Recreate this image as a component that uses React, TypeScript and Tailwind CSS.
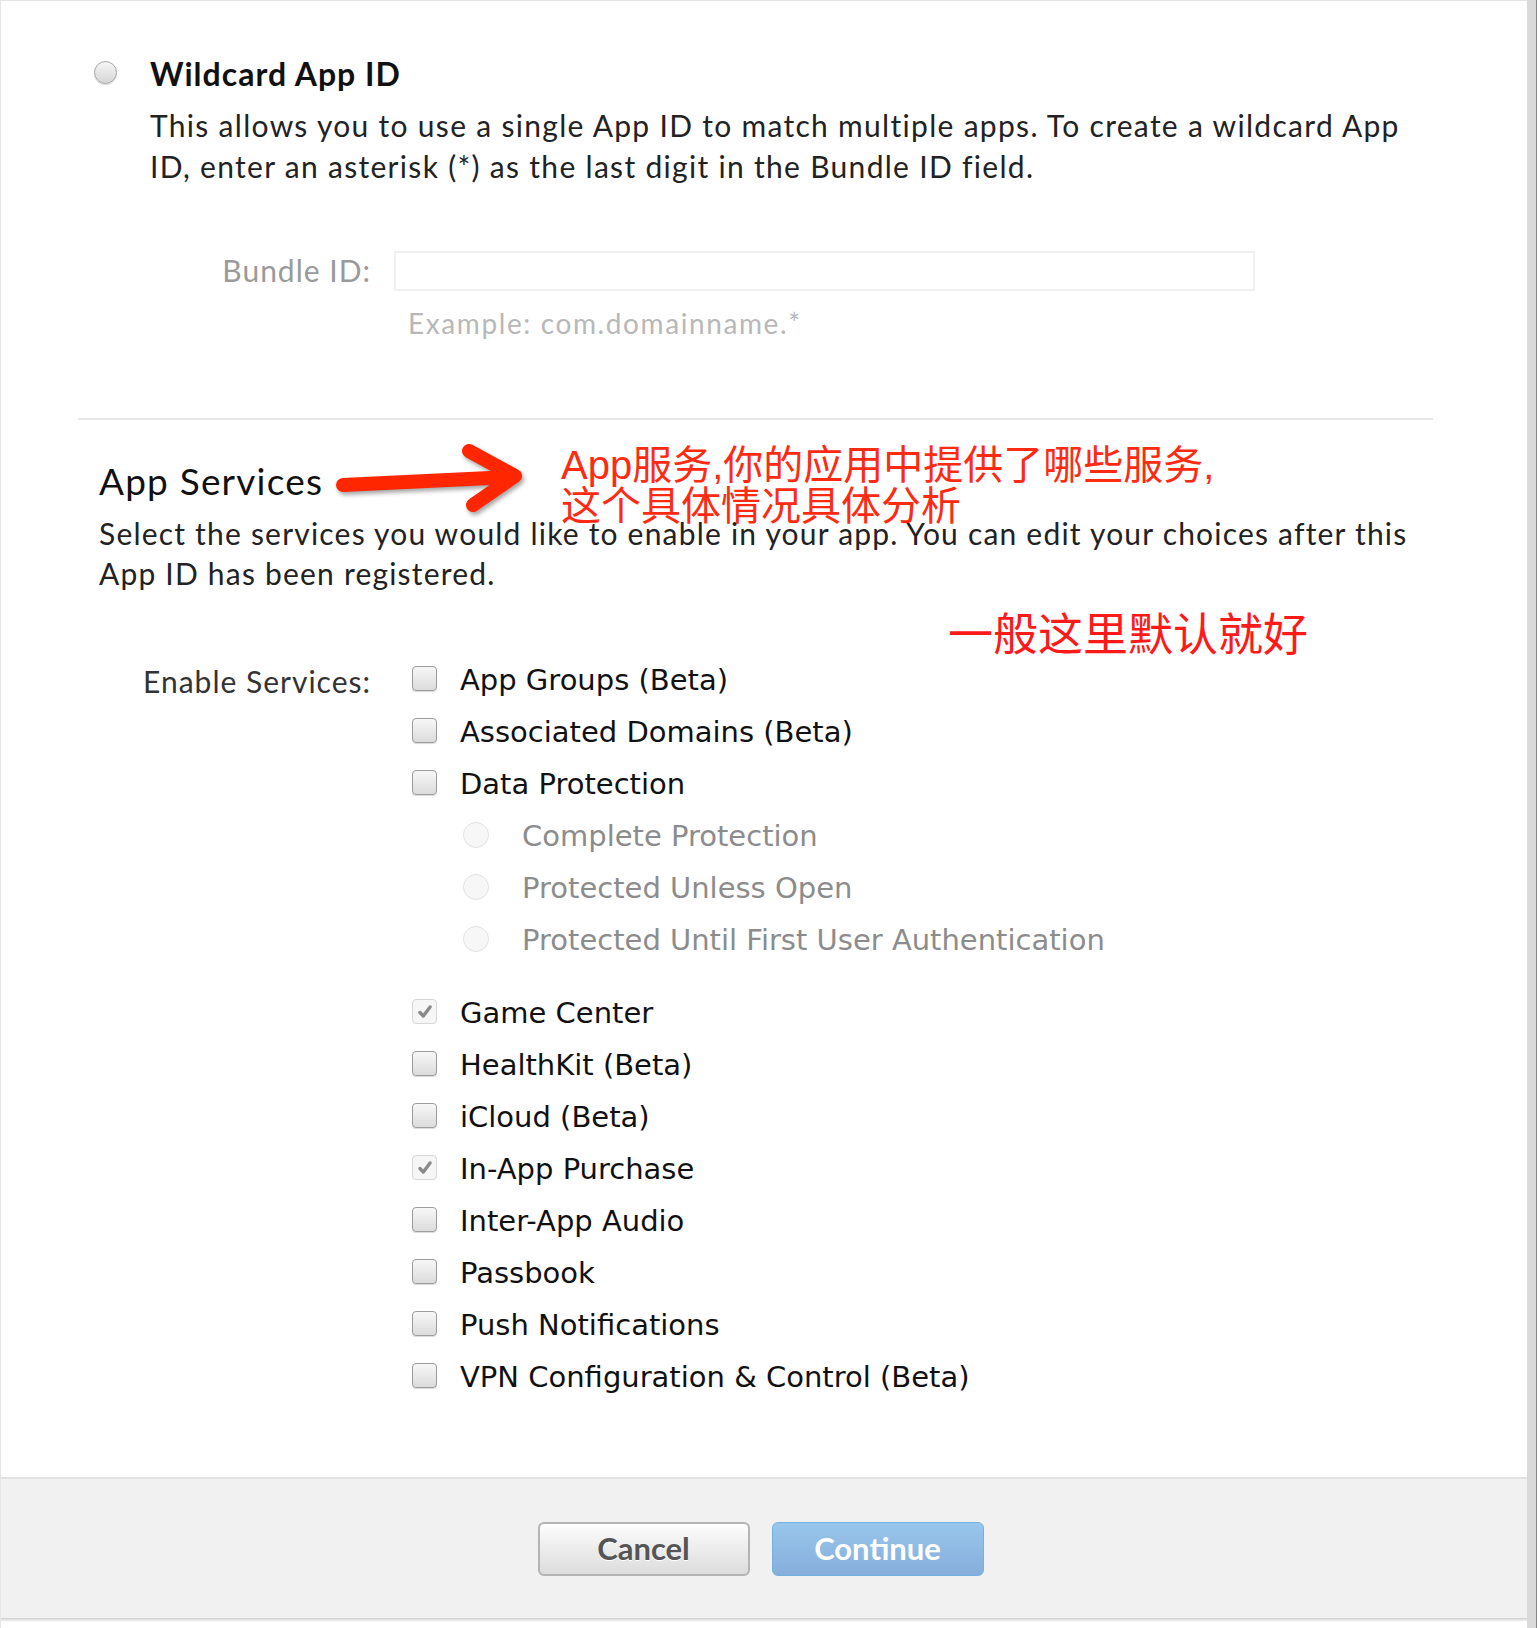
import React from 'react';

interface Service {
  label: string;
  checked?: boolean;
  options?: string[];
}

const services: Service[] = [
  { label: 'App Groups (Beta)' },
  { label: 'Associated Domains (Beta)' },
  {
    label: 'Data Protection',
    options: ['Complete Protection', 'Protected Unless Open', 'Protected Until First User Authentication'],
  },
  { label: 'Game Center', checked: true },
  { label: 'HealthKit (Beta)' },
  { label: 'iCloud (Beta)' },
  { label: 'In-App Purchase', checked: true },
  { label: 'Inter-App Audio' },
  { label: 'Passbook' },
  { label: 'Push Notifications' },
  { label: 'VPN Configuration & Control (Beta)' },
];

function Checkbox({ checked }: { checked?: boolean }) {
  if (checked) {
    return (
      <span className="w-[25px] h-[25px] mb-[5px] shrink-0 rounded-[4px] border border-[#d6d6d6] bg-[#f6f6f6] flex items-center justify-center">
        <svg width="18" height="18" viewBox="0 0 16 16">
          <path d="M3.5 8.5 L6.5 11.5 L12.5 3.5" fill="none" stroke="#8a8a8a" strokeWidth="3" strokeLinecap="round" strokeLinejoin="round" />
        </svg>
      </span>
    );
  }
  return (
    <span className="w-[25px] h-[25px] mb-[5px] shrink-0 rounded-[4px] border border-[#9c9c9c] bg-gradient-to-b from-[#f7f7f7] to-[#dcdcdc] shadow-[0_1px_1px_rgba(0,0,0,0.15)]" />
  );
}

function Arrow() {
  return (
    <svg
      className="absolute left-[320px] top-[432px] drop-shadow-[2px_3px_2px_rgba(0,0,0,0.35)]"
      width="220"
      height="90"
      viewBox="0 0 220 90"
    >
      <path
        d="M22 52 L190 44 M148 18 L194 43 L152 72"
        fill="none"
        stroke="#ff2600"
        strokeWidth="14"
        strokeLinecap="round"
        strokeLinejoin="round"
      />
    </svg>
  );
}

export default function App() {
  return (
    <div className="w-[1538px] h-[1628px] bg-white flex font-[Lato,sans-serif] tracking-[1px] text-[#222]">
      <div className="w-[1527px] flex flex-col border-l border-t border-[#e6e6e6] relative">
        <div className="flex-1">
          {/* Wildcard App ID */}
          <div className="flex items-start pl-[93px] pt-[52px]">
            <span className="w-[23px] h-[23px] mt-[8px] shrink-0 rounded-full border border-[#a6a6a6] bg-gradient-to-b from-[#f6f6f6] to-[#d6d6d6] shadow-[0_1px_1px_rgba(0,0,0,0.15)]" />
            <div className="ml-[33px]">
              <h3 className="text-[32px] leading-[41px] font-bold text-[#111]">Wildcard App ID</h3>
              <p className="mt-[11px] w-[1275px] text-[30px] leading-[41px] tracking-[1.3px] text-[#222]">
                This allows you to use a single App ID to match multiple apps. To create a wildcard App ID, enter an
                asterisk (*) as the last digit in the Bundle ID field.
              </p>
            </div>
          </div>

          <div className="flex items-center mt-[63px]">
            <label className="w-[370px] text-right text-[30px] leading-[41px] text-[#9a9a9a]">Bundle ID:</label>
            <div className="ml-[23px] w-[861px] h-[40px] border-2 border-[#f0f0f0] bg-white" />
          </div>
          <p className="ml-[407px] mt-[16px] text-[28px] leading-[33px] tracking-[1.6px] text-[#b8b8b8]">
            Example: com.domainname.*
          </p>

          <div className="ml-[77px] mt-[78px] w-[1355px] h-[2px] bg-[#e6e6e6]" />

          {/* App Services */}
          <div className="pl-[98px]">
            <h2 className="mt-[40px] text-[37px] leading-[42px] tracking-[1.2px] text-[#111]">App Services</h2>
            <p className="mt-[11px] w-[1340px] text-[30px] leading-[40px] tracking-[1.2px] text-[#222]">
              Select the services you would like to enable in your app. You can edit your choices after this App ID has
              been registered.
            </p>
          </div>

          <div className="flex mt-[62px]">
            <div className="w-[370px] h-[52px] flex items-center justify-end text-[30px] leading-[41px] text-[#333]">
              Enable Services:
            </div>
            <div className="ml-[41px] font-['DejaVu_Sans',sans-serif] tracking-normal text-[29px]">
              {services.map((s) => (
                <div key={s.label} className={s.options ? 'mb-[21px]' : ''}>
                  <div className="h-[52px] flex items-center gap-[23px] text-[#111]">
                    <Checkbox checked={s.checked} />
                    <span>{s.label}</span>
                  </div>
                  {s.options?.map((o) => (
                    <div key={o} className="h-[52px] flex items-center pl-[51px] gap-[33px] text-[#8c8c8c]">
                      <span className="w-[26px] h-[26px] mb-[4px] shrink-0 rounded-full border border-[#e2e2e2] bg-[#f7f7f7]" />
                      <span>{o}</span>
                    </div>
                  ))}
                </div>
              ))}
            </div>
          </div>
        </div>

        {/* Footer */}
        <div className="h-[141px] border-t-2 border-[#e2e2e2] bg-[#f1f1f1] flex items-center justify-center gap-[22px] pr-[7px]">
          <button className="w-[212px] h-[54px] rounded-[6px] border-2 border-[#b4b4b4] bg-gradient-to-b from-[#fdfdfd] to-[#dcdcdc] text-[31px] font-bold tracking-normal text-[#555] [text-shadow:0_1px_0_#fff]">
            Cancel
          </button>
          <button className="w-[212px] h-[54px] rounded-[6px] border border-[#72b2e0] bg-gradient-to-b from-[#98c6ec] to-[#86aedb] text-[31px] font-bold tracking-normal text-white">
            Continue
          </button>
        </div>
        <div className="h-[4px] bg-gradient-to-b from-[#cfcfcf] to-white" />
        <div className="h-[6px] bg-white" />

        {/* Annotations */}
        <Arrow />
        <div className="absolute left-[560px] top-[444px] text-[40px] leading-[41px] tracking-normal text-[#ff2a12] font-['Liberation_Sans','Noto_Sans_CJK_SC',sans-serif]">
          <div>App服务,你的应用中提供了哪些服务,</div>
          <div>这个具体情况具体分析</div>
        </div>
        <div className="absolute left-[947px] top-[606px] text-[45px] leading-[50px] tracking-normal text-[#ff1a1a] font-['Noto_Sans_CJK_SC',sans-serif]">
          一般这里默认就好
        </div>
      </div>
      <div className="w-[9px] h-full bg-[#dadada]" />
      <div className="w-px h-full bg-[#8a8a8a]" />
      <div className="w-px h-full bg-white" />
    </div>
  );
}
